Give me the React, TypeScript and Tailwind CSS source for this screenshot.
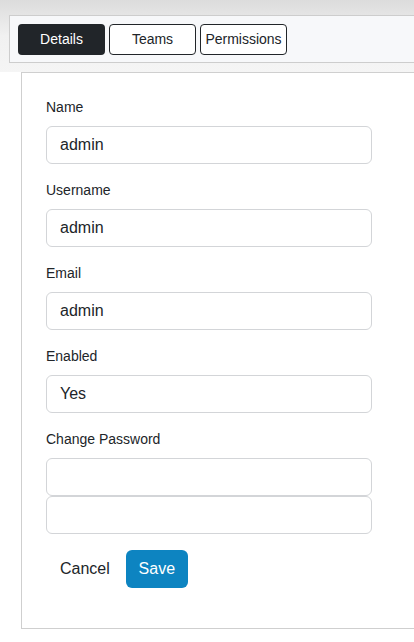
import React from 'react';

const fields = [
  { label: 'Name', value: 'admin' },
  { label: 'Username', value: 'admin' },
  { label: 'Email', value: 'admin' },
  { label: 'Enabled', value: 'Yes' },
];

const App = () => {
  return (
    <div className="min-h-screen bg-white text-[#212529]" style={{ fontFamily: '"Liberation Sans", Arial, sans-serif' }}>
      {/* Tab header */}
      <div className="bg-gradient-to-b from-[#dcdcdc] via-[#f1f1f1] to-[#f5f5f5] pt-[15px] pl-[9px] pb-[9px]">
        <div className="flex gap-[4px] border border-r-0 border-[#cdcdcd] bg-[#f7f8fa] pl-[8px] pt-[8px] pb-[7px]">
          <button className="h-[31px] w-[87px] rounded-[4px] bg-[#212529] text-[14px] text-white">Details</button>
          <button className="h-[31px] w-[87px] rounded-[4px] border border-[#212529] bg-white text-[14px] text-[#212529]">Teams</button>
          <button className="h-[31px] w-[87px] rounded-[4px] border border-[#212529] bg-white text-[14px] text-[#212529]">Permissions</button>
        </div>
      </div>

      {/* Details card */}
      <div className="ml-[21px] border border-r-0 border-[#cfcfcf] pl-[24px] pt-[26px] pb-[40px]">
        {fields.map((f) => (
          <div key={f.label} className="mb-[18px]">
            <div className="mb-[10px] text-[14px] leading-[17px]">{f.label}</div>
            <div className="flex h-[38px] w-[326px] items-center rounded-[6px] border border-[#d3d5d8] px-[13px] text-[16px]">
              {f.value}
            </div>
          </div>
        ))}
        <div className="mb-[10px] text-[14px] leading-[17px]">Change Password</div>
        <div className="h-[38px] w-[326px] rounded-[6px] border border-[#d3d5d8]" />
        <div className="h-[38px] w-[326px] rounded-[6px] border border-[#d3d5d8]" />
        <div className="mt-[16px] flex items-center gap-[2px]">
          <button className="h-[38px] px-[14px] text-[16px] text-[#212529]">Cancel</button>
          <button className="h-[38px] w-[62px] rounded-[6px] bg-[#0d84c1] text-[16px] text-white">Save</button>
        </div>
      </div>
    </div>
  );
};

export default App;
